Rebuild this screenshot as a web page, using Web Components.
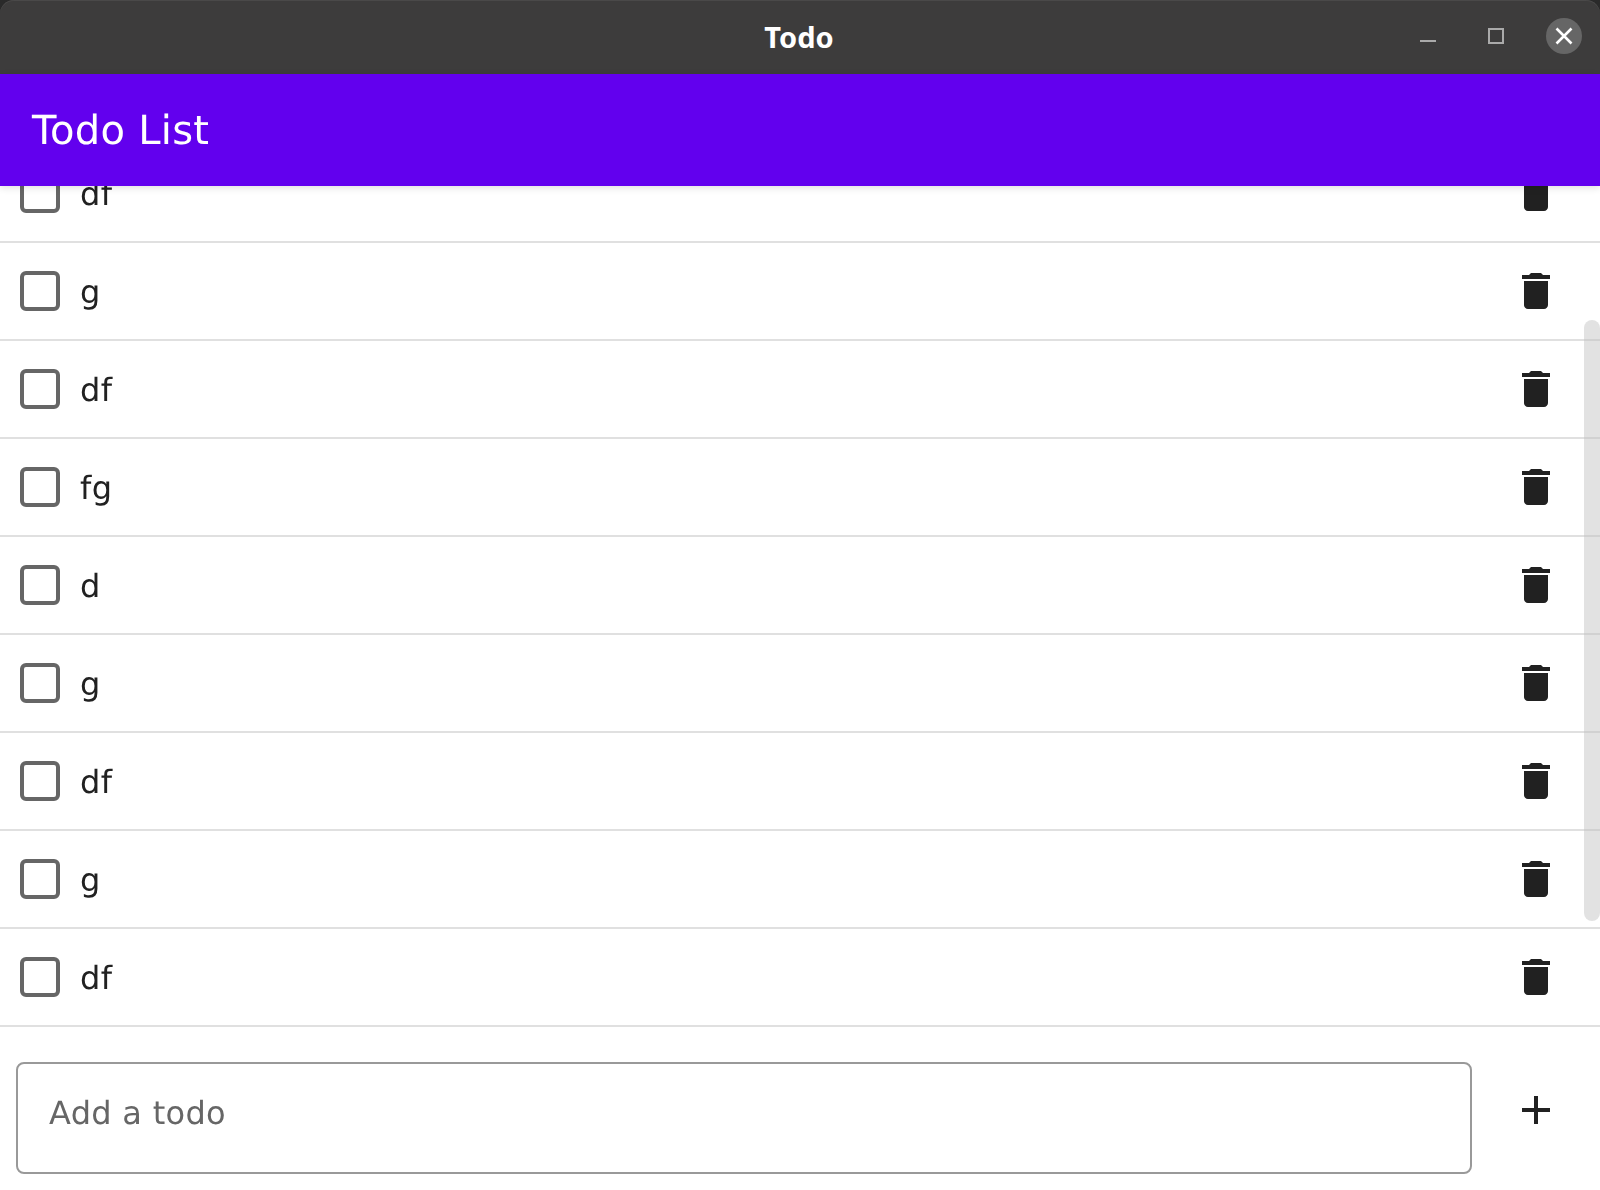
<!DOCTYPE html>
<html><head><meta charset="utf-8"><title>Todo</title>
<style>html,body{margin:0;height:100%;background:#2a2a2a;overflow:hidden}</style></head>
<body><todo-app></todo-app>
<template id="tb"><style>
:host{display:grid;grid-template-columns:1fr auto 1fr;align-items:center;height:74px;background:#3d3c3c;color:#fff;box-shadow:inset 0 1px 0 #4a4949;border-radius:14px 14px 0 0;box-sizing:border-box}
.t{font:700 29px/1 "Noto Sans",sans-serif;padding-bottom:2px;margin-left:-2px}
.c{display:flex;justify-content:flex-end;align-items:center;padding:0 18px 2px 0}
.c svg+svg{margin-left:36px}
.c svg:last-child{margin-left:34px}
svg{display:block}
</style><span></span><span class="t"><slot></slot></span><div class="c">
<svg width="32" height="32" viewBox="0 0 32 32"><rect x="8" y="20" width="16" height="2" fill="#aaa"/></svg>
<svg width="32" height="32" viewBox="0 0 32 32"><rect x="9" y="9" width="14" height="14" fill="none" stroke="#aaa" stroke-width="2"/></svg>
<svg width="36" height="36" viewBox="0 0 36 36"><circle cx="18" cy="18" r="18" fill="#666"/><path d="M10.500 10.500l15 15M25.500 10.500l-15 15" stroke="#fff" stroke-width="2.600" fill="none"/></svg>
</div></template>
<template id="ab"><style>
:host{display:flex;align-items:center;position:relative;z-index:2;height:112px;box-sizing:border-box;padding:2px 0 0 32px;background:#6200ee;color:#fff;font:40px/1 "DejaVu Sans",sans-serif;text-rendering:geometricPrecision;letter-spacing:.3px;box-shadow:0 2px 7px rgba(0,0,0,.12)}
</style><slot></slot></template>
<template id="ti"><style>
:host{display:flex;align-items:center;box-sizing:border-box;height:98px;border-bottom:2px solid #e0e0e0;padding:0 40px 0 20px;color:#212121;font:32px/1 "DejaVu Sans",sans-serif;text-rendering:geometricPrecision;letter-spacing:.5px}
.b{width:40px;height:40px;box-sizing:border-box;border:4px solid #666;border-radius:6px;flex:none;margin-right:20px}
.l{flex:1;padding-top:1px;will-change:transform}
svg{display:block}
</style><div class="b"></div><div class="l"><slot></slot></div>
<svg width="48" height="48" viewBox="0 0 24 24"><path fill="#212121" d="M6 19c0 1.100.9 2 2 2h8c1.100 0 2-.9 2-2V7H6v12zM19 4h-3.500l-1-1h-5l-1 1H5v2h14V4z"/></svg></template>
<template id="tl"><style>
:host{display:block;position:relative;flex:1;min-height:0;overflow:hidden;background:#fff}
.i{margin-top:-41px}
.s{position:absolute;right:0;top:134px;width:16px;height:601px;border-radius:8px;background:rgba(190,190,190,.45)}
</style><div class="i"><slot></slot></div><div class="s"></div></template>
<template id="af"><style>
:host{display:flex;align-items:flex-start;background:#fff;height:163px;box-sizing:border-box;padding:35px 40px 0 16px}
.f{flex:1;height:112px;box-sizing:border-box;border:2px solid #999;border-radius:8px;padding:29px 31px 0;color:#666;font:32px/1.300 "DejaVu Sans",sans-serif;text-rendering:geometricPrecision;letter-spacing:.3px;margin-right:40px}
.p{will-change:transform}
svg{display:block;margin-top:24px}
</style><div class="f"><div class="p"><slot></slot></div></div>
<svg width="48" height="48" viewBox="0 0 24 24"><path fill="#212121" d="M19 13h-6v6h-2v-6H5v-2h6V5h2v6h6v2z"/></svg></template>
<script>
function def(n,id){customElements.define(n,class extends HTMLElement{constructor(){super();this.attachShadow({mode:'open'}).appendChild(document.getElementById(id).content.cloneNode(true))}})}
def('title-bar','tb');def('app-bar','ab');def('todo-item','ti');def('todo-list','tl');def('add-form','af');
customElements.define('todo-app',class extends HTMLElement{constructor(){super();
const s=this.attachShadow({mode:'open'});
s.innerHTML='<style>:host{display:flex;flex-direction:column;width:1600px;height:1190px;font-family:"DejaVu Sans",sans-serif}</style><title-bar>Todo</title-bar><app-bar>Todo List</app-bar><todo-list>'+['df','g','df','fg','d','g','df','g','df'].map(t=>'<todo-item>'+t+'</todo-item>').join('')+'</todo-list><add-form>Add a todo</add-form>';
}});
</script></body></html>
